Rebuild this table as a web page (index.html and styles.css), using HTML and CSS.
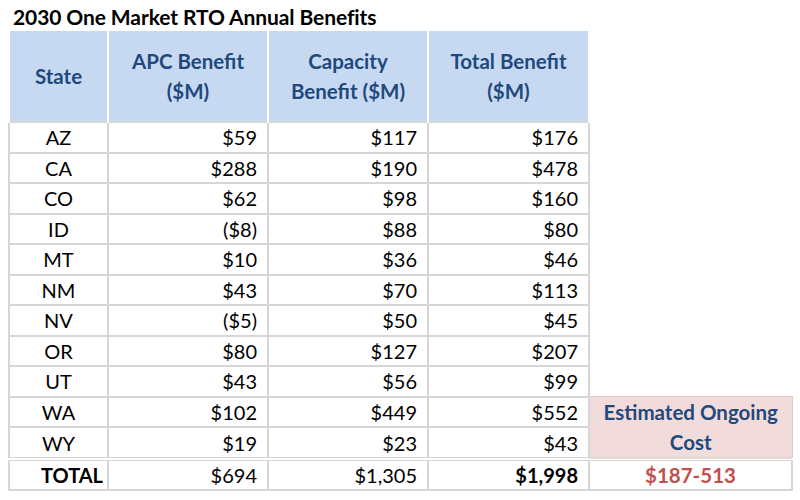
FILE: index.html
```html
<!DOCTYPE html>
<html>
<head>
<meta charset="utf-8">
<link rel="stylesheet" href="styles.css">
</head>
<body>
<div class="page">
  <h1 class="title">2030 One Market RTO Annual Benefits</h1>
  <table class="bench">
    <colgroup>
      <col class="c-state"><col class="c-num"><col class="c-num"><col class="c-num2"><col class="c-cost">
    </colgroup>
    <thead>
      <tr>
        <th>State</th>
        <th>APC Benefit<br>($M)</th>
        <th>Capacity<br>Benefit ($M)</th>
        <th>Total Benefit<br>($M)</th>
        <th class="blank"></th>
      </tr>
    </thead>
    <tbody>
      <tr><td class="st">AZ</td><td>$59</td><td>$117</td><td>$176</td><td class="blank"></td></tr>
      <tr><td class="st">CA</td><td>$288</td><td>$190</td><td>$478</td><td class="blank"></td></tr>
      <tr><td class="st">CO</td><td>$62</td><td>$98</td><td>$160</td><td class="blank"></td></tr>
      <tr><td class="st">ID</td><td>($8)</td><td>$88</td><td>$80</td><td class="blank"></td></tr>
      <tr><td class="st">MT</td><td>$10</td><td>$36</td><td>$46</td><td class="blank"></td></tr>
      <tr><td class="st">NM</td><td>$43</td><td>$70</td><td>$113</td><td class="blank"></td></tr>
      <tr><td class="st">NV</td><td>($5)</td><td>$50</td><td>$45</td><td class="blank"></td></tr>
      <tr><td class="st">OR</td><td>$80</td><td>$127</td><td>$207</td><td class="blank"></td></tr>
      <tr><td class="st">UT</td><td>$43</td><td>$56</td><td>$99</td><td class="blank"></td></tr>
      <tr><td class="st">WA</td><td>$102</td><td>$449</td><td>$552</td><td class="cost-label" rowspan="2">Estimated Ongoing<br>Cost</td></tr>
      <tr class="last"><td class="st">WY</td><td>$19</td><td>$23</td><td>$43</td></tr>
      <tr class="total"><td class="tot">TOTAL</td><td>$694</td><td>$1,305</td><td class="bold">$1,998</td><td class="cost">$187-513</td></tr>
    </tbody>
  </table>
</div>
</body>
</html>
```

FILE: styles.css
```css
html, body {
  margin: 0;
  padding: 0;
  background: #ffffff;
}

.page {
  padding: 4px 0 0 8px;
  font-family: Lato, "Open Sans", sans-serif;
  color: #000;
}

.title {
  margin: 0 0 0 5px;
  font-size: 21px;
  font-weight: 700;
  line-height: 25px;
  height: 27px;
  letter-spacing: -0.1px;
}

.bench {
  border-collapse: collapse;
  table-layout: fixed;
  font-size: 20px;
}

.c-state { width: 99px; }
.c-num { width: 160px; }
.c-num2 { width: 161px; }
.c-cost { width: 203px; }

.bench th {
  background: #c6d9f1;
  color: #1f497d;
  font-weight: 700;
  font-size: 20.5px;
  line-height: 30px;
  height: 60px;
  padding: 15px 0;
  border-left: 2px solid #ffffff;
  border-right: 2px solid #ffffff;
  border-top: 0;
  text-align: center;
}

.bench th.blank {
  background: #ffffff;
  border: 0;
}

.bench td {
  border: 2px solid #d6d6d6;
  height: 28.5px;
  padding: 0 10px 0 6px;
  line-height: 28px;
  text-align: right;
}

.bench td.st { text-align: center; padding: 0; }

.bench td.blank { border: 0; border-left: 2px solid #d6d6d6; }

.bench td.cost-label {
  background: #f2dcdb;
  color: #1f497d;
  font-weight: 700;
  font-size: 20.5px;
  text-align: center;
  line-height: 30px;
  padding: 0;
  border: 1px solid #e9c9c8;
  border-bottom: 4px double #d6d6d6;
}

.bench tr.last td { border-bottom: 4px double #d6d6d6; }

.bench tr.total td { height: 28px; }

.bench td.tot { font-weight: 700; padding-right: 4px; }

.bench td.bold { font-weight: 700; }

.bench td.cost {
  color: #c0504d;
  font-weight: 700;
  font-size: 20.5px;
  text-align: center;
  padding: 0;
}
```
